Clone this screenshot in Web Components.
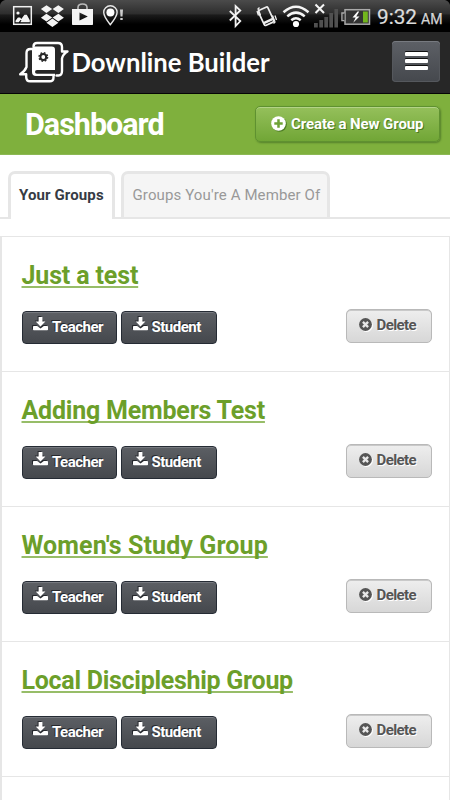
<!DOCTYPE html>
<html lang="en"><head><meta charset="utf-8"><title>Downline Builder</title>
<style>
html,body{margin:0;background:#fff}
body{width:450px;height:800px;overflow:hidden;font-family:Roboto,"Liberation Sans",sans-serif}
</style></head><body>
<downline-app></downline-app>
<script>
function define(name, html){
  const t=document.createElement('template');t.innerHTML=html;
  customElements.define(name,class extends HTMLElement{
    constructor(){super();this.attachShadow({mode:'open'}).appendChild(t.content.cloneNode(true));}
  });
}
define('status-bar',`<style>
:host{display:flex;box-sizing:border-box;height:31px;background:linear-gradient(#4b4b4b,#2d2d2d 45%,#1b1b1b 48%,#000 78%);color:#e6e6e6}
svg{display:block}
</style><svg width="450" height="31" viewBox="0 0 450 31">
<path d="M0 0h5Q1 1 0 5zM450 0h-5q4 1 5 5z" fill="#000"/>
<g fill="none" stroke="#f0f0f0" stroke-width="1.5"><rect x="13.7" y="6.7" width="17.6" height="17.6"/></g>
<g fill="#f4f4f4"><circle cx="18" cy="13" r="1.6"/><path d="M15.5 22.3v-1.6l2.4-3.2h2.2l1.2 1.5 3.2-4.2h2.3l3 5.5v2h-9.5l1.2-2.2-1-.2-1.7 2.4z"/>
<path d="M46.5 5.2l-5.6 3.9 5.5 4 5.8-4zM58.3 5.2l5.6 3.9-5.5 4-5.8-4zM46.4 13.8l-5.5 4 5.6 3.6 5.7-4zM58.4 13.8l5.5 4-5.6 3.6-5.7-4zM52.4 18.5l-6 4.3 6 4.2 6-4.2z"/>
<path fill-rule="evenodd" d="M72 9h21v15.3q0 .7-.7.7H72.700q-.7 0-.7-.7zM79.500 12.500v8l8.300-4z"/></g>
<path d="M78 9V7.500Q78 4 82.500 4T87 7.500V9" fill="none" stroke="#bbb" stroke-width="1.6"/>
<path d="M110.300 24.700C106.500 20 103.700 16.500 103.700 12.300a6.700 6.500 0 0 1 13.400 0c0 4.200-2.900 7.700-6.800 12.400z" fill="none" stroke="#e8e8e8" stroke-width="1.400"/><circle cx="110.400" cy="12.400" r="4" fill="#fff"/>
<path d="M120 9.500h3l-.5 7h-2zM120.300 18h2.400v2h-2.400z" fill="#ccc"/>
<path d="M229.800 11l10.500 10-4.700 5V6l4.700 4.500-10.500 10" fill="none" stroke="#f2f2f2" stroke-width="1.800"/>
<g fill="none" stroke="#eee"><g transform="rotate(-25 266 16)"><rect x="260.800" y="8" width="10.400" height="16.500" rx="1.500" stroke-width="1.700"/><path d="M261 21.500h10" stroke-width="2.500"/></g><path d="M259.500 7.500l-1.500 1.500 2.500 6M257 11l1.500 4.500M272.500 15.500l2.500 6.500-1.500 1.500M275 15.500l1.500 4.500" stroke-width="1.300"/></g>
<g fill="none" stroke="#f5f5f5" stroke-width="2.500"><path d="M283.500 12.300q12.500-11 25 0M287.300 16.400q8.700-7.500 17.400 0M291.300 20.300q4.700-4 9.400 0"/></g><circle cx="296" cy="24" r="3.100" fill="#fff"/>
<path d="M315.500 4.500l8.500 8.500M324 4.500l-8.500 8.500" stroke="#f5f5f5" stroke-width="2.100"/>
<path d="M314 23h3.800v4.500H314zM319.300 20h3.800v7.500h-3.800zM324.300 17h3.800v10.500h-3.800zM329.300 13h3.700v14.500h-3.700zM334.400 9h3.600v18.500h-3.600z" fill="#505050"/>
<rect x="345" y="9.700" width="24.500" height="14.500" fill="#333" stroke="#aaa" stroke-width="1.500"/><path d="M344.500 13h-2.600v7.700h2.600" fill="#333" stroke="#aaa" stroke-width="1.300"/><rect x="363" y="11.500" width="4.800" height="11" fill="#72b51d"/><path d="M357.500 11.500l-5 6h3.200l-2.500 5.200 6.300-6.300h-3.300l3-4.900z" fill="#fff"/>
<text x="377" y="24" font-size="21" textLength="40" lengthAdjust="spacingAndGlyphs" fill="#ddd" stroke="#ddd" stroke-width=".2">9:32</text>
<text x="421" y="23.500" font-size="14.500" textLength="21.500" lengthAdjust="spacingAndGlyphs" fill="#d5d5d5" stroke="#d5d5d5" stroke-width=".25">AM</text>
</svg>`);
define('brand-logo',`<style>:host{display:block;width:260px;height:60px}svg{display:block}</style>
<svg width="260" height="60" viewBox="14 33 260 60">
<g fill="none" stroke="#fff" stroke-width="2.400" stroke-linejoin="round" stroke-linecap="round">
<path d="M33.500 46.500q0-3.500 3.500-3.500h21q4 0 4 4V51.500h5.500q-4.500 2.500-5.500 7V71q0 4.500-3.500 4.500h-2"/>
<path d="M33 49h-2.500q-4 0-4 4V67q-1.500 4-6.300 7.300h6V77q0 4.300 4 4.300h19.500q3.800 0 3.800-3.800v-2"/></g>
<path fill="#fff" fill-rule="evenodd" d="M35 46.500h16.800q3.200 0 3.200 3.200V70H37q-2 0-2 2 0 1.800 2 1.800h18v2.200H36q-4 0-4-4V49.500q0-3 3-3z"/>
<circle cx="43.300" cy="57" r="2.900" fill="none" stroke="#272727" stroke-width="2"/><circle cx="43.300" cy="57" r="4.300" fill="none" stroke="#272727" stroke-width="1.400" stroke-dasharray="1.700 1.677"/>
<text x="71.500" y="71.600" font-family="Lato" font-weight="700" font-size="26" textLength="198" lengthAdjust="spacingAndGlyphs" fill="#fff">Downline Builder</text></svg>`);
define('menu-button',`<style>:host{display:flex;flex-direction:column;align-items:center;justify-content:center;gap:3px;box-sizing:border-box;width:48px;height:41px;border-radius:4px;background:linear-gradient(#5d6066,#45484d);box-shadow:inset 0 1px #777a80,inset 0 0 0 1px #55585d;padding-bottom:1px}
i{width:23px;height:4px;background:#fff;border-radius:1px;box-shadow:0 -1px #111}</style><i></i><i></i><i></i>`);
define('app-header',`<style>:host{display:flex;justify-content:space-between;align-items:flex-start;box-sizing:border-box;height:63px;border-top:1px solid #000;border-bottom:1px solid #050505;background:#272727;padding:1px 10px 0 14px}menu-button{margin-top:8px}</style><brand-logo></brand-logo><menu-button></menu-button>`);
define('create-button',`<style>:host{display:flex;align-items:center;box-sizing:border-box;width:185px;height:36px;padding:0 0 0 15px;border:1px solid #5f9130;border-radius:5px;background:linear-gradient(#95c05b,#71a636);box-shadow:inset 0 1px #b3d387,1px 1px 2px #56822b;color:#fff;font-weight:700;font-size:15px;text-shadow:1px 1px #4b7b22;white-space:nowrap}
svg{margin-right:5px;filter:drop-shadow(1px 1px #4b7b22)}span{letter-spacing:-.1px}</style>
<svg width="15" height="15" viewBox="0 0 15 15"><circle cx="7.500" cy="7.500" r="7.300" fill="#fff"/><path d="M7.500 3.300v8.400M3.300 7.500h8.400" stroke="#6ea237" stroke-width="2.500"/></svg><span><slot></slot></span>`);
define('page-banner',`<style>:host{display:flex;justify-content:space-between;align-items:center;box-sizing:border-box;height:61px;background:#7fb03d;padding:0 10px 0 25px;border-bottom:1px solid #8cb854}
h1{margin:2px 0 0;font-size:30.5px;line-height:40px;font-weight:700;color:#fff;letter-spacing:-1px}create-button{margin-bottom:1px}</style><h1><slot></slot></h1><create-button>Create a New Group</create-button>`);
define('tab-item',`<style>:host{display:block;box-sizing:border-box;height:46px;border:3px solid #e6e6e6;border-bottom:0;border-radius:7px 7px 0 0;background:#f5f5f5;color:#999;font-size:15px;line-height:43px;padding-left:8.5px;white-space:nowrap;width:209px;letter-spacing:.12px}
:host([active]){height:48px;width:107px;padding-left:8px;background:#fff;color:#363b44;font-weight:700}</style><slot></slot>`);
define('tab-strip',`<style>:host{display:flex;gap:6px;align-items:flex-start;box-sizing:border-box;height:48px;margin-top:16px;padding-left:8px;background:linear-gradient(#e6e6e6,#e6e6e6) 0 46px/100% 2px no-repeat}</style><slot></slot>`);
define('file-button',`<style>:host{display:flex;box-sizing:border-box;width:95.500px;height:33px;padding:0 0 0 10.500px;border:1px solid #252b34;border-radius:4px;background:linear-gradient(#5c5f64,#45484d);box-shadow:inset 0 1px #777a80;color:#fff;font-size:15px;line-height:30px;font-weight:700;text-shadow:-1px -1px #25282d;white-space:nowrap;letter-spacing:-.5px}
svg{margin:5px 4px 0 0;flex:none;filter:drop-shadow(-.5px -1px #25282d)}</style>
<svg width="15" height="14" viewBox="0 0 15 14"><path fill="#fff" d="M5.600 0h3.800v4.500h3L7.500 9.600 2.600 4.500h3zM.8 9h3.400l3.300 2.500L10.800 9h3.400q.8 0 .8.800v2.700q0 .8-.8.800H.8q-.8 0-.8-.8V9.800Q0 9 .8 9z"/></svg><slot></slot>`);
define('delete-button',`<style>:host{display:flex;box-sizing:border-box;width:86px;height:34px;margin-left:auto;padding-left:12px;border:1px solid #b9b9b9;border-radius:5px;background:linear-gradient(#eee,#d7d7d7);box-shadow:inset 0 1px #c9c9c9;color:#555;font-size:15px;line-height:30px;font-weight:700;text-shadow:1px 1px #fff;white-space:nowrap;letter-spacing:-.6px}
svg{margin:8px 4.500px 0 0;flex:none;filter:drop-shadow(1px 1px #fff)}</style>
<svg width="13" height="13" viewBox="0 0 13 13"><circle cx="6.500" cy="6.500" r="6.400" fill="#555"/><path d="M3.900 3.900l5.200 5.200M9.100 3.900L3.900 9.100" stroke="#e8e8e8" stroke-width="2.300"/></svg><slot></slot>`);
define('group-row',`<style>:host{display:block;box-sizing:border-box;height:135px;border-bottom:1px solid #e6e6e6;padding:24px 17px 0 19.500px}
a{display:block;width:max-content;height:30px;line-height:30px;font-size:25px;font-weight:700;color:#6c9f2a;letter-spacing:var(--track,0px);text-decoration:underline;text-decoration-color:#97bd68;text-decoration-thickness:2px;text-underline-offset:1.500px;text-decoration-skip-ink:none}
div{display:flex;gap:4px;margin-top:18px;align-items:flex-start}file-button{margin-top:2px}</style>
<a><slot></slot></a><div><file-button>Teacher</file-button><file-button>Student</file-button><delete-button>Delete</delete-button></div>`);
define('group-list',`<style>:host{display:block;box-sizing:border-box;margin-top:17px;border:1px solid #e6e6e6;border-left-width:2px;height:580px}</style><slot></slot>`);
define('downline-app',`<style>:host{display:block}</style><status-bar></status-bar><app-header></app-header><page-banner>Dashboard</page-banner>
<tab-strip><tab-item active>Your Groups</tab-item><tab-item>Groups You're A Member Of</tab-item></tab-strip>
<group-list><group-row style="--track:-.15px">Just a test</group-row><group-row style="--track:-.21px">Adding Members Test</group-row><group-row style="--track:.1px">Women's Study Group</group-row><group-row style="--track:-.28px">Local Discipleship Group</group-row></group-list>`);
</script></body></html>
